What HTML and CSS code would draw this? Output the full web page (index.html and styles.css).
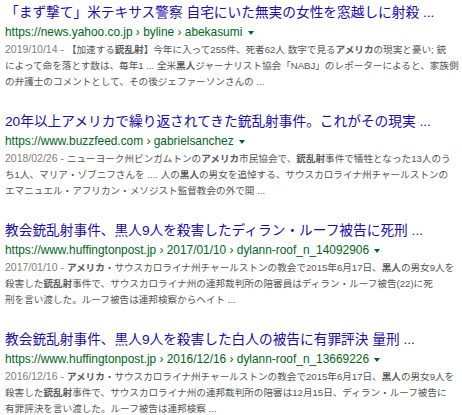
FILE: index.html
```html
<!DOCTYPE html>
<html lang="ja">
<head>
    <meta charset="UTF-8">
    <title>検索結果</title>
    <link rel="stylesheet" href="styles.css">
</head>
<body>

    <div class="results">

        <div class="result">
            <a class="title" href="#">「まず撃て」米テキサス警察 自宅にいた無実の女性を窓越しに射殺 ...</a>
            <div class="url">https://news.yahoo.co.jp › byline › abekasumi <span class="caret"></span></div>
            <div class="snippet">
                <span class="line"><span class="date">2019/10/14 - </span>【加速する<b>銃乱射</b>】今年に入って255件、死者62人 数字で見る<b>アメリカ</b>の現実と憂い; 銃</span>
                <span class="line">によって命を落とす数は、毎年1 ... 全米<b>黒人</b>ジャーナリスト協会「NABJ」のレポーターによると、家族側</span>
                <span class="line">の弁護士のコメントとして、その後ジェファーソンさんの ...</span>
            </div>
        </div>

        <div class="result">
            <a class="title" href="#">20年以上アメリカで繰り返されてきた銃乱射事件。これがその現実 ...</a>
            <div class="url">https://www.buzzfeed.com › gabrielsanchez <span class="caret"></span></div>
            <div class="snippet">
                <span class="line"><span class="date">2018/02/26 - </span>ニューヨーク州ビンガムトンの<b>アメリカ</b>市民協会で、<b>銃乱射</b>事件で犠牲となった13人のう</span>
                <span class="line">ち1人、マリア・ゾブニフさんを .... 人の<b>黒人</b>の男女を追悼する、サウスカロライナ州チャールストンの</span>
                <span class="line">エマニュエル・アフリカン・メソジスト監督教会の外で開 ...</span>
            </div>
        </div>

        <div class="result">
            <a class="title" href="#">教会銃乱射事件、黒人9人を殺害したディラン・ルーフ被告に死刑 ...</a>
            <div class="url">https://www.huffingtonpost.jp › 2017/01/10 › dylann-roof_n_14092906 <span class="caret"></span></div>
            <div class="snippet">
                <span class="line"><span class="date">2017/01/10 - </span><b>アメリカ</b>・サウスカロライナ州チャールストンの教会で2015年6月17日、<b>黒人</b>の男女9人を</span>
                <span class="line">殺害した<b>銃乱射</b>事件で、サウスカロライナ州の連邦裁判所の陪審員はディラン・ルーフ被告(22)に死</span>
                <span class="line">刑を言い渡した。ルーフ被告は連邦検察からヘイト ...</span>
            </div>
        </div>

        <div class="result">
            <a class="title" href="#">教会銃乱射事件、黒人9人を殺害した白人の被告に有罪評決 量刑 ...</a>
            <div class="url">https://www.huffingtonpost.jp › 2016/12/16 › dylann-roof_n_13669226 <span class="caret"></span></div>
            <div class="snippet">
                <span class="line"><span class="date">2016/12/16 - </span><b>アメリカ</b>・サウスカロライナ州チャールストンの教会で2015年6月17日、<b>黒人</b>の男女9人を</span>
                <span class="line">殺害した<b>銃乱射</b>事件で、サウスカロライナ州の連邦裁判所の陪審は12月15日、ディラン・ルーフ被告に</span>
                <span class="line">有罪評決を言い渡した。ルーフ被告は連邦検察 ...</span>
            </div>
        </div>

    </div>

</body>
</html>
```

FILE: styles.css
```css
* {
    margin: 0;
    padding: 0;
    box-sizing: border-box;
}

body {
    font-family: 'Liberation Sans', 'Noto Sans CJK JP', sans-serif;
    background-color: #ffffff;
    overflow: hidden;
}

.results {
    padding: 3px 0 0 5px;
    display: flex;
    flex-direction: column;
    gap: 22px;
}

.result {
    display: flex;
    flex-direction: column;
}

.title {
    font-size: 13.7px;
    line-height: 20px;
    color: #1a0dab;
    text-decoration: none;
    white-space: nowrap;
}

.url {
    font-size: 11.9px;
    line-height: 18px;
    color: #006621;
    white-space: nowrap;
}

.caret {
    display: inline-block;
    width: 0;
    height: 0;
    margin-left: 2px;
    vertical-align: middle;
    border-left: 3px solid transparent;
    border-right: 3px solid transparent;
    border-top: 4px solid #006621;
}

.snippet {
    font-size: 9.6px;
    line-height: 16px;
    color: #545454;
}

.line {
    display: block;
    white-space: nowrap;
}

.date {
    font-size: 10.5px;
    color: #808080;
}

.snippet b {
    color: #5a5a5a;
}
```
